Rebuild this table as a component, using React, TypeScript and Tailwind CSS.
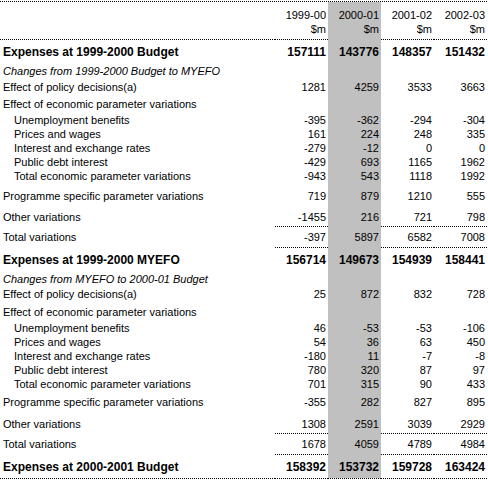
import clsx from 'clsx';

type Row = {
  label: string;
  values?: (number | string)[];
  kind: 'bold' | 'italic' | 'plain' | 'sub';
  box: string; // height + top padding
  rule?: 'nums' | 'all';
};

const YEARS = ['1999-00', '2000-01', '2001-02', '2002-03'];

const ROWS: Row[] = [
  { label: 'Expenses at 1999-2000 Budget', values: [157111, 143776, 148357, 151432], kind: 'bold', box: 'h-[24px] pt-[5px]' },
  { label: 'Changes from 1999-2000 Budget to MYEFO', kind: 'italic', box: 'h-[14px]' },
  { label: 'Effect of policy decisions(a)', values: [1281, 4259, 3533, 3663], kind: 'plain', box: 'h-[17px] pt-[2px]' },
  { label: 'Effect of economic parameter variations', kind: 'plain', box: 'h-[18px] pt-[2px]' },
  { label: 'Unemployment benefits', values: [-395, -362, -294, -304], kind: 'sub', box: 'h-[14px]' },
  { label: 'Prices and wages', values: [161, 224, 248, 335], kind: 'sub', box: 'h-[14px]' },
  { label: 'Interest and exchange rates', values: [-279, -12, 0, 0], kind: 'sub', box: 'h-[14px]' },
  { label: 'Public debt interest', values: [-429, 693, 1165, 1962], kind: 'sub', box: 'h-[14px]' },
  { label: 'Total economic parameter variations', values: [-943, 543, 1118, 1992], kind: 'sub', box: 'h-[14px]' },
  { label: 'Programme specific parameter variations', values: [719, 879, 1210, 555], kind: 'plain', box: 'h-[20px] pt-[6px]' },
  { label: 'Other variations', values: [-1455, 216, 721, 798], kind: 'plain', box: 'h-[24px] pt-[7px]', rule: 'nums' },
  { label: 'Total variations', values: [-397, 5897, 6582, 7008], kind: 'plain', box: 'h-[21px] pt-[3px]', rule: 'nums' },

  { label: 'Expenses at 1999-2000 MYEFO', values: [156714, 149673, 154939, 158441], kind: 'bold', box: 'h-[24px] pt-[5px]' },
  { label: 'Changes from MYEFO to 2000-01 Budget', kind: 'italic', box: 'h-[14px]' },
  { label: 'Effect of policy decisions(a)', values: [25, 872, 832, 728], kind: 'plain', box: 'h-[17px] pt-[1px]' },
  { label: 'Effect of economic parameter variations', kind: 'plain', box: 'h-[18px] pt-[2px]' },
  { label: 'Unemployment benefits', values: [46, -53, -53, -106], kind: 'sub', box: 'h-[14px]' },
  { label: 'Prices and wages', values: [54, 36, 63, 450], kind: 'sub', box: 'h-[14px]' },
  { label: 'Interest and exchange rates', values: [-180, 11, -7, -8], kind: 'sub', box: 'h-[14px]' },
  { label: 'Public debt interest', values: [780, 320, 87, 97], kind: 'sub', box: 'h-[14px]' },
  { label: 'Total economic parameter variations', values: [701, 315, 90, 433], kind: 'sub', box: 'h-[14px]' },
  { label: 'Programme specific parameter variations', values: [-355, 282, 827, 895], kind: 'plain', box: 'h-[20px] pt-[4px]' },
  { label: 'Other variations', values: [1308, 2591, 3039, 2929], kind: 'plain', box: 'h-[23px] pt-[6px]', rule: 'nums' },
  { label: 'Total variations', values: [1678, 4059, 4789, 4984], kind: 'plain', box: 'h-[21px] pt-[3px]', rule: 'nums' },
  { label: 'Expenses at 2000-2001 Budget', values: [158392, 153732, 159728, 163424], kind: 'bold', box: 'h-[24px] pt-[5px]', rule: 'all' },
];

function TableRow({ row }: { row: Row }) {
  const bold = row.kind === 'bold';
  return (
    <div className={clsx('flex', row.box.split(' ')[0])}>
      <div
        className={clsx(
          'w-[275px] shrink-0 whitespace-nowrap',
          row.box.split(' ')[1],
          row.kind === 'sub' ? 'pl-[14px]' : 'pl-[3px]',
          bold && 'font-bold text-[12px]',
          row.kind === 'italic' && 'italic',
          row.rule === 'all' && 'border-b border-dotted border-black'
        )}
      >
        {row.label}
      </div>
      {[0, 1, 2, 3].map((i) => (
        <div
          key={i}
          className={clsx(
            'w-[53px] shrink-0 text-right pr-[2px]',
            row.box.split(' ')[1],
            bold && 'font-bold text-[12px]',
            i === 1 && 'bg-[#c0c0c0]',
            row.rule && 'border-b border-dotted',
            row.rule && (i === 1 && row.rule === 'nums' ? 'border-transparent' : 'border-black'),
            i === 1 && row.rule === 'all' && 'bg-clip-padding'
          )}
        >
          {row.values ? row.values[i] : ''}
        </div>
      ))}
    </div>
  );
}

export default function App() {
  return (
    <div className="w-[488px] h-[483px] bg-white text-black font-['Liberation_Sans',Arial,sans-serif] text-[11px] leading-[14px]">
      <div className="w-[487px] mt-px border-t border-dotted border-black">
        <div className="flex h-[38px]">
          <div className="w-[275px] shrink-0 border-b border-dotted border-black" />
          {YEARS.map((y, i) => (
            <div
              key={y}
              className={clsx(
                'w-[53px] shrink-0 text-right pr-[2px] pt-[6px] border-b border-dotted',
                i === 1 ? 'bg-[#c0c0c0] border-transparent' : 'border-black'
              )}
            >
              <div>{y}</div>
              <div>$m</div>
            </div>
          ))}
        </div>
        {ROWS.map((r, idx) => (
          <TableRow key={idx} row={r} />
        ))}
      </div>
    </div>
  );
}
